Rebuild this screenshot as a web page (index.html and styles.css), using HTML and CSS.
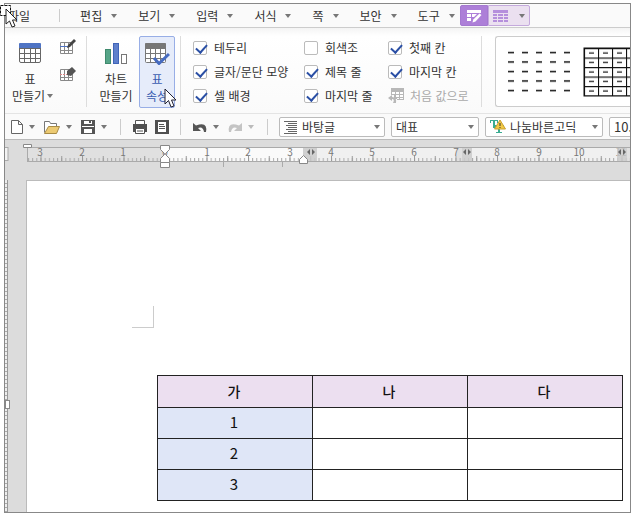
FILE: index.html
```html
<!DOCTYPE html>
<html lang="ko">
<head>
  <meta charset="UTF-8">
  <title>표 속성</title>
  <link rel="stylesheet" href="styles.css">
</head>
<body>
<div class="app">
  <!-- 메뉴 -->
  <nav class="menu">
    <button class="menu-item file">파일</button>
    <span class="menu-sep"></span>
    <button class="menu-item">편집<i class="caret"></i></button>
    <button class="menu-item">보기<i class="caret"></i></button>
    <button class="menu-item">입력<i class="caret"></i></button>
    <button class="menu-item">서식<i class="caret"></i></button>
    <button class="menu-item">쪽<i class="caret"></i></button>
    <button class="menu-item">보안<i class="caret"></i></button>
    <button class="menu-item last">도구<i class="caret"></i></button>
    <button class="tab current" aria-label="표 디자인">
      <svg width="16" height="14" viewBox="0 0 16 14">
        <path d="M1 1h14v3H1zM1 5h4v3H1zM6 5h5l-3 3H6zM1 9h4v3H1z" fill="#fff"/>
        <path d="M13.500 4.500l2 1.500-6 6.500-3 1 .8-3z" fill="#fff"/>
      </svg>
    </button>
    <button class="tab light" aria-label="표 레이아웃">
      <svg width="15" height="13" viewBox="0 0 15 13">
        <path d="M0 1h15v3H0zM0 5h4v2H0zM5 5h5v2H5zM11 5h4v2h-4zM0 8h4v2H0zM5 8h5v2H5zM11 8h4v2h-4zM0 11h4v2H0zM5 11h5v2H5zM11 11h4v2h-4z" fill="#b58fdc"/>
      </svg>
      <i class="caret"></i>
    </button>
  </nav>

  <!-- 리본 -->
  <div class="ribbon">
    <div class="group group-make">
      <button class="big">
        <svg width="24" height="24" viewBox="0 0 24 24">
          <rect x="1.500" y="2.500" width="21" height="19" rx="1.500" fill="#fff" stroke="#666"/>
          <path d="M1 7V3q0-1 1-1h20q1 0 1 1v4z" fill="#4f74c4"/>
          <path d="M1 7.500h22M1 12.500h22M1 17.500h22M6.500 7v15M12.500 7v15M17.500 7v15" stroke="#666"/>
        </svg>
        <span>표</span>
        <span class="with-caret">만들기<i class="caret"></i></span>
      </button>
      <div class="small-tools">
        <button class="tool" aria-label="표 그리기">
          <svg width="18" height="16" viewBox="0 0 18 16">
            <path d="M1.500 3.500h12v11h-12zM5.500 3v12M9.500 3v12M1 11.500h13" fill="#fff" stroke="#888"/>
            <path d="M1 7.500h8" stroke="#4f74c4"/>
            <path d="M8 9l1-3 6-6 2 2-6 6z" fill="#444"/>
          </svg>
        </button>
        <button class="tool" aria-label="표 지우개">
          <svg width="18" height="16" viewBox="0 0 18 16">
            <path d="M1.500 3.500h12v11h-12zM5.500 3v12M9.500 3v12M1 11.500h13" fill="#fff" stroke="#888"/>
            <path d="M1 8.500h8" stroke="#d88" stroke-dasharray="2 1"/>
            <path d="M8 5l5-4 4 4-5 5-4-1z" fill="#555"/>
          </svg>
        </button>
      </div>
    </div>
    <div class="group group-prop">
      <button class="big">
        <svg width="24" height="24" viewBox="0 0 24 24">
          <rect x="1.500" y="8.500" width="5" height="14" fill="#57a588" stroke="#3f8a6d"/>
          <rect x="9.500" y="2.500" width="5" height="20" fill="#5f80cc" stroke="#4065b8"/>
          <rect x="17.500" y="13.500" width="5" height="9" fill="#fff" stroke="#777"/>
        </svg>
        <span>차트</span>
        <span>만들기</span>
      </button>
      <button class="big current">
        <svg width="26" height="24" viewBox="0 0 26 24">
          <rect x="1.500" y="2.500" width="20" height="19" rx="1" fill="#fff" stroke="#777"/>
          <path d="M1 7V3q0-1 1-1h19q1 0 1 1v4z" fill="#777"/>
          <path d="M1 7.500h21M1 12.500h21M1 17.500h21M6.500 7v15M11.500 7v15M16.500 7v15" stroke="#777"/>
          <path d="M10 17l5 5.500L25 13" fill="none" stroke="#466bc0" stroke-width="3"/>
        </svg>
        <span>표</span>
        <span>속성</span>
        <svg class="pointer" width="13" height="20" viewBox="0 0 13 20">
          <path d="M1 1v15l3.500-3.500L7 19l3-1-2.500-6H12z" fill="#fff" stroke="#223"/>
        </svg>
      </button>
    </div>
    <div class="group checks">
      <label><input type="checkbox" checked>테두리</label>
      <label><input type="checkbox">회색조</label>
      <label><input type="checkbox" checked>첫째 칸</label>
      <label><input type="checkbox" checked>글자/문단 모양</label>
      <label><input type="checkbox" checked>제목 줄</label>
      <label><input type="checkbox" checked>마지막 칸</label>
      <label><input type="checkbox" checked>셀 배경</label>
      <label><input type="checkbox" checked>마지막 줄</label>
      <button class="reset" disabled>
        <svg width="16" height="16" viewBox="0 0 16 16">
          <path d="M3 0h13v12H9v-1H6V7H3z" fill="#b8b8b8"/>
          <path d="M4 4h3v2H4zM8 4h3v2H8zM12 4h3v2h-3zM8 7h3v2H8zM12 7h3v2h-3zM9 10h2v1H9zM12 10h3v1h-3z" fill="#fff"/>
          <path d="M0 10l4-3v2q5 0 4 6H5q2-4-1-4v2z" fill="#b8b8b8"/>
        </svg>처음 값으로
      </button>
    </div>
    <div class="styles">
      <svg width="160" height="70" viewBox="0 0 160 70">
        <defs>
          <pattern id="dash" x="12" y="11" width="14" height="9.500" patternUnits="userSpaceOnUse">
            <path d="M0 4.500h6" stroke="#111" stroke-width="1.500"/>
          </pattern>
          <pattern id="cell" x="88" y="11" width="14" height="9.500" patternUnits="userSpaceOnUse">
            <path d="M0 .5h14M.5 0v10" stroke="#111" stroke-width="1.200"/>
            <path d="M5 5h5" stroke="#111" stroke-width="1.200"/>
          </pattern>
        </defs>
        <rect x="12" y="11" width="63" height="48" fill="url(#dash)"/>
        <rect x="88" y="11" width="71" height="48" fill="url(#cell)" stroke="#111"/>
      </svg>
    </div>
  </div>

  <!-- 도구 모음 -->
  <div class="toolbar">
    <button class="tool" aria-label="새 문서">
      <svg width="14" height="16" viewBox="0 0 14 16">
        <path d="M1.500 1.500h7l4 4v9h-11zM8.500 1.500v4h4" fill="#fff" stroke="#666"/>
      </svg>
    </button>
    <i class="caret"></i>
    <button class="tool" aria-label="불러오기">
      <svg width="18" height="16" viewBox="0 0 18 16">
        <path d="M1.500 13.500v-11h5l1 2h6v3" fill="#fff" stroke="#777"/>
        <path d="M1.500 14.500l4-7h11l-3 7z" fill="#ecca72" stroke="#a88b45"/>
      </svg>
    </button>
    <i class="caret"></i>
    <button class="tool" aria-label="저장하기">
      <svg width="16" height="16" viewBox="0 0 16 16">
        <path d="M1 1h14v14H1z" fill="#555"/>
        <path d="M4 2h8v3H4zM2 7h12v1H2zM4 10h8v4H4z" fill="#fff"/>
        <path d="M9 2h2v2H9z" fill="#555"/>
      </svg>
    </button>
    <i class="caret"></i>
    <span class="sep"></span>
    <button class="tool" aria-label="인쇄">
      <svg width="16" height="16" viewBox="0 0 16 16">
        <path d="M3.500 5V1.500h9V5" fill="#fff" stroke="#555"/>
        <path d="M1 5h14v8H1z" fill="#505050"/>
        <path d="M3.500 9.500h9v5h-9z" fill="#fff" stroke="#505050"/>
        <path d="M5 12h6" stroke="#555"/>
      </svg>
    </button>
    <button class="tool" aria-label="미리 보기">
      <svg width="16" height="16" viewBox="0 0 16 16">
        <path d="M1 1h14v14H1z" fill="#505050"/>
        <path d="M4 3h8v10H4z" fill="#fff"/>
        <path d="M5 5.500h5M5 7.500h6M5 9.500h6" stroke="#555"/>
      </svg>
    </button>
    <span class="sep"></span>
    <button class="tool" aria-label="되돌리기">
      <svg width="16" height="16" viewBox="0 0 16 16">
        <path d="M1 4v8h8L6 9q5-2 6 4h2Q16 2 4 6.500z" fill="#555"/>
      </svg>
    </button>
    <i class="caret"></i>
    <button class="tool" aria-label="다시 실행" disabled>
      <svg width="16" height="16" viewBox="0 0 16 16">
        <path d="M15 4v8H7l3-3q-5-2-6 4H2Q0 2 12 6.500z" fill="#c4c4c4"/>
      </svg>
    </button>
    <i class="caret off"></i>
    <span class="sep"></span>
    <div class="field para">
      <svg width="14" height="14" viewBox="0 0 14 14">
        <path d="M0 1.500h13M4 3.500h9M2 5.500h11M4 7.500h9M2 9.500h11M4 11.500h9M0 13.500h13" stroke="#666"/>
      </svg>
      <select aria-label="스타일"><option>바탕글</option></select>
      <i class="caret"></i>
    </div>
    <div class="field lang">
      <select aria-label="언어"><option>대표</option></select>
      <i class="caret"></i>
    </div>
    <div class="field font">
      <svg width="16" height="15" viewBox="0 0 16 15">
        <path d="M0 1h8v3H7V2H5v7H3V2H1v2H0zM5 6h9v3h-1V8h-3v5h2v1H6v-1h2V8H5z" fill="#3bac91"/>
        <path d="M10 1l5.500 9h-11z" fill="#f3c944" stroke="#c9a030"/>
        <path d="M10 4v3M10 8v1" stroke="#333"/>
      </svg>
      <select aria-label="글꼴"><option>나눔바른고딕</option></select>
      <i class="caret"></i>
    </div>
    <div class="field size">
      <select aria-label="글자 크기"><option>10.0</option></select>
    </div>
  </div>

  <!-- 편집 창 -->
  <div class="work">
    <svg class="ruler" width="100%" height="40">
      <defs>
        <pattern id="tick" x="160" width="4.150" height="4" y="17" patternUnits="userSpaceOnUse">
          <path d="M.5 1v3" stroke="#aaa"/>
        </pattern>
        <pattern id="half" x="160" width="20.750" height="5" y="16" patternUnits="userSpaceOnUse">
          <path d="M.5 0v5" stroke="#999"/>
        </pattern>
      </defs>
      <rect x="-1" y="7.500" width="4" height="13" fill="#f4f4f4" stroke="#aaa"/>
      <rect x="22" y="7" width="100%" height="14" fill="#e0e0e0"/>
      <rect x="160" y="7" width="138" height="14" fill="#fafafa"/>
      <rect x="312" y="7" width="140" height="14" fill="#f0f0f0"/>
      <rect x="467" y="7" width="145" height="14" fill="#f0f0f0"/>
      <path d="M22 7.500h620M22 21.500h620M22.500 7v14" stroke="#aaa"/>
      <rect x="22" y="17" width="100%" height="4" fill="url(#tick)"/>
      <rect x="22" y="16" width="100%" height="5" fill="url(#half)"/>
      <path d="M218.500 22v5M277.500 22v5" stroke="#aaa"/>
      <g class="nums">
        <text x="35" y="16">3</text><text x="77" y="16">2</text><text x="118" y="16">1</text>
        <text x="160" y="16">0</text>
        <text x="202" y="16">1</text><text x="243" y="16">2</text><text x="285" y="16">3</text>
        <text x="326" y="16">4</text><text x="367" y="16">5</text><text x="409" y="16">6</text>
        <text x="451" y="16">7</text><text x="492" y="16">8</text><text x="534" y="16">9</text>
        <text x="574" y="16">10</text><text x="616" y="16">11</text>
      </g>
      <path d="M298 8h14v13h-14zM457 8h10v13h-10zM612 8h10v13h-10z" fill="#ccc" fill-opacity=".8"/>
      <path d="M305 9v6l-3-3zM307 9v6l3-3zM461 9v6l-3-3zM463 9v6l3-3zM616 9v6l-3-3zM618 9v6l3-3z" fill="#666"/>
      <path d="M18.500 4.500h8v3h-8z" fill="#fff" stroke="#888"/>
      <path d="M155.500 5.500h9v4l-4 4h-1l-4-4zM155.500 22.500v-4l4-4h1l4 4v4z" fill="#fff" stroke="#888"/>
      <path d="M155.500 22.500h9v5h-9zM294.500 19.500l4-4 4 4v4h-8z" fill="#fff" stroke="#888"/>
    </svg>
    <div class="desk">
      <div class="side-ruler"><span class="side-mark"></span></div>
      <div class="page">
        <div class="corner"></div>
        <table class="sheet">
          <thead>
            <tr><th>가</th><th>나</th><th>다</th></tr>
          </thead>
          <tbody>
            <tr><td>1</td><td></td><td></td></tr>
            <tr><td>2</td><td></td><td></td></tr>
            <tr><td>3</td><td></td><td></td></tr>
          </tbody>
        </table>
      </div>
    </div>
  </div>
  <svg class="start" width="18" height="24" viewBox="0 0 18 24">
    <path d="M.5 1.500h10v10H.5z" fill="#fff" stroke="#111" stroke-dasharray="3 1"/>
    <path d="M6 5v15l3.500-3L12 23l3-1-2.500-6H17z" fill="#fff" stroke="#222"/>
  </svg>
</div>
</body>
</html>
```

FILE: styles.css
```css
* {
  box-sizing: border-box;
}
body {
  margin: 0;
  padding: 3px 5px 8px 4px;
  background-color: #fff;
  color: #333;
  font: 12px/16px "Noto Sans CJK KR", "Noto Sans", sans-serif;
}
button, select {
  margin: 0;
  padding: 0;
  border: 0;
  background: none;
  color: inherit;
  font: inherit;
}
svg {
  display: block;
  flex: none;
}
.app {
  position: relative;
  border: 1px solid #888;
}
.caret {
  flex: none;
  border: 3px solid transparent;
  border-top: 4px solid #777;
  border-bottom: 0;
}
.caret.off {
  border-top-color: #bbb;
}

/* menu */
.menu {
  display: flex;
  align-items: center;
  height: 24px;
  border-bottom: 1px solid #ccc;
  background-color: #fafafa;
  overflow: hidden;
}
.menu-item {
  display: flex;
  flex: none;
  align-items: center;
  gap: 9px;
  margin-right: 21px;
}
.menu-item.file {
  margin: 0 29px 0 3px;
}
.menu-item.last {
  margin-right: 5px;
}
.menu-sep {
  width: 1px;
  height: 13px;
  margin-right: 20px;
  background-color: #ccc;
}
.tab {
  display: flex;
  flex: none;
  align-items: center;
  justify-content: center;
  height: 21px;
  border: 1px solid #a478d0;
}
.tab.current {
  width: 28px;
  border-radius: 2px 0 0 2px;
  background-color: #ad7fd8;
}
.tab.light {
  gap: 11px;
  width: 42px;
  border-color: #c4a9dc;
  border-radius: 0 2px 2px 0;
  background-color: #ebe0f0;
}

/* ribbon */
.ribbon {
  display: flex;
  height: 86px;
  padding: 8px 0 6px;
  border-bottom: 1px solid #e4e4e4;
  background: linear-gradient(#f4f4f4, #fff 8px, #fafafa);
  overflow: hidden;
}
.group {
  display: flex;
  flex: none;
  border-right: 1px solid #ddd;
}
.big {
  position: relative;
  display: flex;
  flex: none;
  flex-direction: column;
  align-items: center;
  width: 36px;
  height: 72px;
  padding-top: 4px;
  border: 1px solid transparent;
  border-radius: 2px;
  line-height: 17px;
  white-space: nowrap;
}
.big svg {
  margin-bottom: 5px;
}
.big.current {
  border-color: #98aee6;
  background-color: #e6ecfa;
  color: #3a5cb0;
}
.with-caret {
  display: flex;
  align-items: center;
  gap: 2px;
  margin-left: 5px;
}
.big .pointer {
  position: absolute;
  top: 51px;
  left: 24px;
  margin: 0;
}
.group-make {
  gap: 11px;
  width: 82px;
  padding-left: 7px;
}
.small-tools {
  display: flex;
  flex-direction: column;
  gap: 11px;
  padding-top: 3px;
}
.tool {
  display: flex;
  flex: none;
}
.group-prop {
  gap: 5px;
  width: 94px;
  padding-left: 11px;
}
.checks {
  display: grid;
  grid-template: repeat(3, 24px) / 111px 84px 94px;
  align-items: center;
  padding-left: 12px;
  width: 301px;
}
.checks label {
  display: flex;
  align-items: center;
  gap: 7px;
}
.checks input {
  display: grid;
  width: 14px;
  height: 14px;
  margin: 0;
  border: 1px solid #bbb;
  border-radius: 2px;
  background-color: #fff;
  appearance: none;
}
.checks input:checked::before {
  content: "";
  width: 9px;
  height: 5px;
  margin: 2px 0 0 2px;
  border: solid #2a4fa5;
  border-width: 0 0 2px 2px;
  transform: rotate(-48deg);
}
.reset {
  display: flex;
  align-items: center;
  gap: 6px;
  color: #aaa;
}
.styles {
  flex: 1;
  min-width: 0;
  margin-left: 13px;
  border: 1px solid #ccc;
  border-right: 0;
  border-radius: 3px 0 0 3px;
  background-color: #fff;
  overflow: hidden;
}

/* toolbar */
.toolbar {
  display: flex;
  align-items: center;
  height: 26px;
  padding-left: 5px;
  border-bottom: 1px solid #bbb;
  background-color: #fafafa;
  overflow: hidden;
}
.toolbar > .tool + .caret {
  margin: 0 8px 0 5px;
}
.toolbar > .tool + .tool {
  margin-left: 6px;
}
.sep {
  flex: none;
  width: 1px;
  height: 16px;
  margin: 0 11px 0 5px;
  background-color: #ccc;
}
.tool + .sep {
  margin-left: 10px;
}
.field {
  display: flex;
  flex: none;
  align-items: center;
  gap: 4px;
  height: 20px;
  margin-right: 6px;
  padding: 0 4px;
  border: 1px solid #bbb;
  border-radius: 2px;
  background-color: #fff;
}
.field select {
  flex: 1;
  min-width: 0;
  appearance: none;
}
.field.para {
  width: 106px;
}
.field.lang {
  width: 88px;
}
.field.font {
  width: 118px;
}
.field.size {
  width: 60px;
  font-size: 13px;
}

/* document */
.work {
  background-color: #dcdcdc;
  overflow: hidden;
}
.nums {
  fill: #777;
  font-size: 10px;
  text-anchor: middle;
}
.desk {
  display: flex;
}
.side-ruler {
  width: 3px;
  margin-right: 18px;
  border-right: 1px solid #999;
  background: repeating-linear-gradient(#eee 0 3px, #aaa 3px 4px);
}
.side-mark {
  display: block;
  width: 5px;
  height: 9px;
  margin-top: 220px;
  border: 1px solid #888;
  background-color: #fff;
}
.page {
  flex: 1;
  padding: 125px 7px 11px 130px;
  border-top: 1px solid #bbb;
  border-left: 1px solid #bbb;
  background-color: #fff;
}
.corner {
  width: 22px;
  height: 22px;
  margin: 0 0 47px -25px;
  border: solid #ccc;
  border-width: 0 1px 1px 0;
}
.sheet {
  width: 100%;
  border-collapse: collapse;
  table-layout: fixed;
  color: #111;
  font-size: 15px;
}
.sheet th, .sheet td {
  height: 31px;
  padding: 0 2px 2px 0;
  border: 1px solid #222;
  text-align: center;
}
.sheet th {
  height: 32px;
  background-color: #ecdff0;
  font-weight: 500;
  font-size: 14px;
}
.sheet td:first-child {
  background-color: #dfe6f7;
}
.start {
  position: absolute;
  top: 0;
  left: -5px;
}
```
